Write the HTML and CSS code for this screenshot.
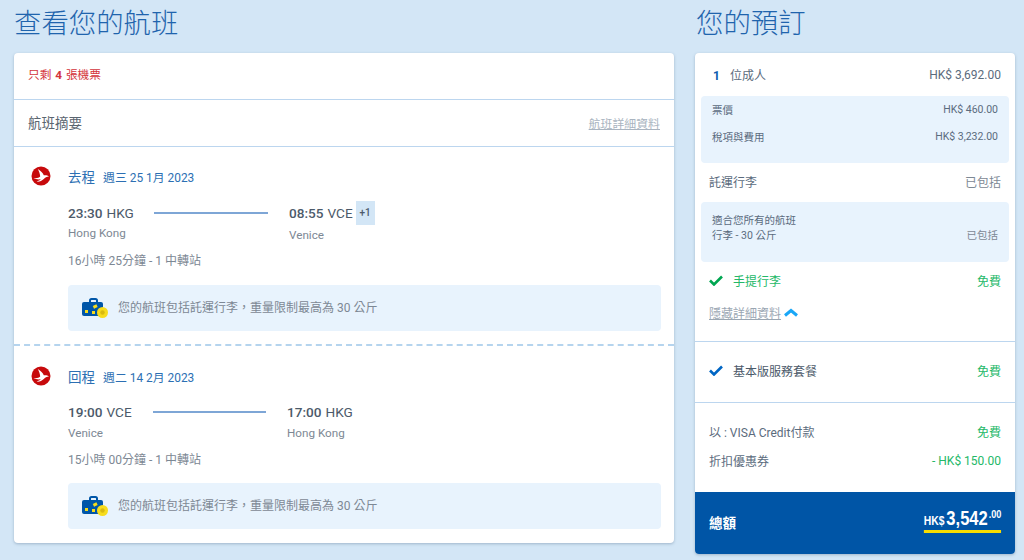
FILE: index.html
```html
<!DOCTYPE html>
<html lang="zh-Hant">
<head>
<meta charset="utf-8">
<title>查看您的航班</title>
<link rel="stylesheet" href="styles.css">
</head>
<body>
<div class="page">
  <main class="left">
    <h1 class="title">查看您的航班</h1>
    <section class="card">
      <div class="alert">只剩 <b>4</b> 張機票</div>
      <div class="summary"><span>航班摘要</span><a class="details">航班詳細資料</a></div>
      <div class="segment seg-out">
        <div class="logo-col">
          <svg class="logo" viewBox="0 0 20 20"><circle cx="10" cy="10" r="9.5" fill="#c70a0c"/><path d="M2.500 12C5.500 12.500 7.800 12 9.200 10.500 9 8 8 5 6.800 3 9.800 4.800 11.800 7 12.800 9.300 14.800 9 16.800 9.400 18 10.500 15.500 10.500 14.200 11.500 12.800 13 10.800 15 8 16 5.500 15.500 7.500 15 8.800 14.200 9.800 13.300 7 13.600 4.500 13.300 2.500 12Z" fill="#fff"/></svg>
        </div>
        <div class="seg-main">
          <div class="seg-head"><span class="way">去程</span><span class="date">週三 25 1月 2023</span></div>
          <div class="route">
            <div class="point from"><div class="time"><b>23:30</b> HKG</div><div class="city">Hong Kong</div></div>
            <div class="line"></div>
            <div class="point to"><div class="time"><b>08:55</b> VCE<span class="plus">+1</span></div><div class="city">Venice</div></div>
          </div>
          <div class="duration">16小時 25分鐘 - 1 中轉站</div>
          <div class="bag-note">
            <svg class="bag" viewBox="0 0 26 20"><path d="M8 5V2.500C8 1.500 8.700 1 9.500 1H13.500C14.300 1 15 1.500 15 2.500V5" fill="none" stroke="#0056a8" stroke-width="2"/><rect x="0" y="4" width="21" height="14" rx="2" fill="#0056a8"/><rect x="3" y="12" width="3" height="3" fill="#f7dc1c"/><rect x="11" y="7" width="4" height="3" fill="#f7dc1c" transform="rotate(-25 13 8)"/><rect x="10" y="13" width="3" height="3" fill="#f7dc1c"/><circle cx="20.500" cy="14.500" r="5.500" fill="#f7dc1c"/><circle cx="20.500" cy="14.500" r="2.200" fill="#d9b90f"/></svg>
            <span>您的航班包括託運行李，重量限制最高為 30 公斤</span>
          </div>
        </div>
      </div>
      <div class="segment seg-back">
        <div class="logo-col">
          <svg class="logo" viewBox="0 0 20 20"><circle cx="10" cy="10" r="9.500" fill="#c70a0c"/><path d="M2.500 12C5.500 12.500 7.800 12 9.200 10.500 9 8 8 5 6.800 3 9.800 4.800 11.800 7 12.800 9.300 14.800 9 16.800 9.400 18 10.500 15.500 10.500 14.200 11.500 12.800 13 10.800 15 8 16 5.500 15.500 7.500 15 8.800 14.200 9.800 13.300 7 13.600 4.500 13.300 2.500 12Z" fill="#fff"/></svg>
        </div>
        <div class="seg-main">
          <div class="seg-head"><span class="way">回程</span><span class="date">週二 14 2月 2023</span></div>
          <div class="route">
            <div class="point from back"><div class="time"><b>19:00</b> VCE</div><div class="city">Venice</div></div>
            <div class="line"></div>
            <div class="point to"><div class="time"><b>17:00</b> HKG</div><div class="city">Hong Kong</div></div>
          </div>
          <div class="duration">15小時 00分鐘 - 1 中轉站</div>
          <div class="bag-note">
            <svg class="bag" viewBox="0 0 26 20"><path d="M8 5V2.500C8 1.500 8.700 1 9.500 1H13.500C14.300 1 15 1.500 15 2.500V5" fill="none" stroke="#0056a8" stroke-width="2"/><rect x="0" y="4" width="21" height="14" rx="2" fill="#0056a8"/><rect x="3" y="12" width="3" height="3" fill="#f7dc1c"/><rect x="11" y="7" width="4" height="3" fill="#f7dc1c" transform="rotate(-25 13 8)"/><rect x="10" y="13" width="3" height="3" fill="#f7dc1c"/><circle cx="20.500" cy="14.500" r="5.500" fill="#f7dc1c"/><circle cx="20.500" cy="14.500" r="2.200" fill="#d9b90f"/></svg>
            <span>您的航班包括託運行李，重量限制最高為 30 公斤</span>
          </div>
        </div>
      </div>
    </section>
  </main>
  <aside class="right">
    <h2 class="title">您的預訂</h2>
    <section class="card booking">
      <div class="b-top">
        <div class="row r-adult"><span><b class="count">1</b>位成人</span><span>HK$ 3,692.00</span></div>
        <div class="panel p-fare">
          <div class="p-row"><span>票價</span><span>HK$ 460.00</span></div>
          <div class="p-row"><span>稅項與費用</span><span>HK$ 3,232.00</span></div>
        </div>
        <div class="row r-bag"><span>託運行李</span><span class="muted">已包括</span></div>
        <div class="panel p-bag">
          <div>適合您所有的航班</div>
          <div class="p-row2"><span>行李 - 30 公斤</span><span class="muted">已包括</span></div>
        </div>
        <div class="row r-hand">
          <span class="with-check green"><svg class="check" viewBox="0 0 14 11"><path d="M1 5.500 5 9.500 13 1.500" fill="none" stroke="#00a651" stroke-width="2.600"/></svg>手提行李</span>
          <span class="green">免費</span>
        </div>
        <div class="hide-link"><a>隱藏詳細資料</a><svg class="chev" viewBox="0 0 14 9"><path d="M1 7.500 7 2.500 13 7.500" fill="none" stroke="#1aa7f7" stroke-width="3"/></svg></div>
      </div>
      <div class="row b-service">
        <span class="with-check"><svg class="check" viewBox="0 0 14 11"><path d="M1 5.500 5 9.500 13 1.500" fill="none" stroke="#0066c4" stroke-width="2.600"/></svg>基本版服務套餐</span>
        <span class="green">免費</span>
      </div>
      <div class="b-pay">
        <div class="row"><span>以 : VISA Credit付款</span><span class="green">免費</span></div>
        <div class="row"><span>折扣優惠券</span><span class="green">- HK$ 150.00</span></div>
      </div>
      <div class="total">
        <span class="total-label">總額</span>
        <span class="amount"><span class="cur">HK$</span><span class="big">3,542</span><sup>.00</sup></span>
      </div>
    </section>
  </aside>
</div>
</body>
</html>
```
FILE: styles.css
```css
* { box-sizing: border-box; }
html, body { margin: 0; padding: 0; }
body {
  width: 1024px;
  height: 560px;
  overflow: hidden;
  background: #d3e6f6;
  font-family: Roboto, "Noto Sans CJK TC", sans-serif;
  color: #5b6b7d;
  font-size: 12px;
}
.page { display: flex; padding: 0 9px 0 14px; gap: 21px; }
.left { width: 660px; }
.right { width: 320px; }
.title {
  margin: 0;
  height: 53px;
  padding-top: 6px;
  font-size: 27.4px;
  line-height: 36px;
  font-weight: 300;
  color: #1f64ad;
}
.right .title { padding-left: 1px; }
.card {
  background: #fff;
  border-radius: 4px;
  box-shadow: 0 1px 3px rgba(60, 90, 120, .35);
}
.alert {
  height: 47px;
  padding: 0 14px 2px;
  line-height: 45px;
  font-size: 11.7px;
  color: #d3333b;
  border-bottom: 1px solid #bcd6ef;
}
.alert b { font-weight: 700; margin: 0 1px; }
.summary {
  height: 47px;
  padding: 0 14px 2px;
  display: flex;
  align-items: center;
  justify-content: space-between;
  border-bottom: 1px solid #bcd6ef;
  font-size: 13.5px;
  color: #5a6570;
}
.details { font-size: 11.900px; color: #a9b4c0; text-decoration: underline; }
.segment { display: flex; padding: 0 13px 0 17px; }
.seg-out { height: 199px; padding-top: 19px; border-bottom: 2px dashed #b5d4ee; }
.seg-back { height: 197px; padding-top: 20px; }
.logo-col { width: 37px; flex: none; }
.logo { width: 20px; height: 20px; display: block; }
.seg-main { flex: 1; min-width: 0; }
.seg-head { display: flex; align-items: center; height: 20px; gap: 8px; color: #2c6fb3; }
.way { font-size: 13.5px; }
.date { font-size: 11.900px; }
.route { display: flex; align-items: flex-start; margin-top: 17px; height: 50px; }
.seg-back .route { margin-top: 16px; }
.point.from { width: 86px; }
.point.from.back { width: 85px; }
.point.to { margin-left: 21px; }
.seg-back .line { width: 113px; }
.time { font-size: 13.6px; line-height: 20px; color: #4c5a6a; display: flex; align-items: center; gap: 4px; height: 20px; }
.time b { font-weight: 500; }
.plus {
  background: #d3e6f6;
  font-size: 10px;
  font-weight: 500;
  height: 24px;
  width: 19px;
  flex: none;
  display: flex;
  align-items: center;
  justify-content: center;
  margin-left: -1px;
}
.city { margin-top: 2px; line-height: 17px; font-size: 11.7px; color: #7d8894; }
.seg-out .point.to .city { margin-top: 4px; }
.seg-back .city { margin-top: 3px; }
.line { width: 114px; height: 2px; background: #7ea6d6; margin-top: 9px; }
.duration { margin-top: 0; line-height: 17px; color: #7d8894; }
.bag-note {
  margin-top: 15px;
  height: 46px;
  background: #e8f3fd;
  border-radius: 4px;
  display: flex;
  align-items: center;
  padding: 0 14px;
  gap: 10px;
  color: #7d8894;
}
.bag-note span { position: relative; top: -2px; }
.seg-back .bag-note { margin-top: 14px; }
.bag { width: 26px; height: 20px; flex: none; }
.booking { height: 501px; display: flex; flex-direction: column; }
.row { display: flex; justify-content: space-between; align-items: center; font-size: 12px; }
.b-top { padding: 0 14px; height: 289px; border-bottom: 1px solid #bcd6ef; }
.r-adult { height: 43px; }
.count { color: #0a5cad; font-weight: 700; margin: 0 10px 0 4px; }
.panel {
  background: #e8f3fd;
  border-radius: 4px;
  margin: 0 -8px;
  padding: 0 11px;
  font-size: 10.500px;
  color: #5b6b7d;
}
.p-fare { height: 67px; }
.p-row { display: flex; justify-content: space-between; height: 27px; align-items: center; }
.r-bag { height: 39px; padding-bottom: 3px; }
.p-bag { height: 60px; padding-top: 11px; line-height: 15px; }
.p-row2 { display: flex; justify-content: space-between; }
.muted { color: #7d8894; }
.r-hand { height: 38px; padding-bottom: 2px; }
.with-check { display: flex; align-items: center; gap: 10px; }
.check { width: 14px; height: 11px; flex: none; }
.green { color: #24b868; }
.hide-link { display: flex; align-items: center; gap: 3px; height: 26px; padding-bottom: 2px; color: #9aa6b2; }
.hide-link a { text-decoration: underline; }
.chev { width: 14px; height: 9px; }
.b-service { height: 61px; padding: 0 14px 4px; border-bottom: 1px solid #bcd6ef; color: #4c5a6a; }
.b-pay { padding: 14px 14px 0; height: 89px; }
.b-pay .row { height: 29px; }
.total {
  flex: 1;
  background: #0055a6;
  border-radius: 0 0 4px 4px;
  color: #fff;
  display: flex;
  justify-content: space-between;
  align-items: center;
  padding: 0 14px;
}
.total-label { font-size: 13.5px; font-weight: 700; padding-bottom: 2px; }
.amount {
  font-weight: 700;
  font-family: "Liberation Sans", sans-serif;
  border-bottom: 3px solid #f7dc00;
  height: 25px;
  display: flex;
  align-items: flex-start;
  white-space: nowrap;
  margin-bottom: 5px;
  transform: scaleX(.83);
  transform-origin: right center;
}
.cur { font-size: 12.5px; line-height: 26px; margin-right: 2px; }
.big { font-size: 20px; line-height: 21px; }
.amount sup { font-size: 11px; line-height: 12px; margin-left: 1px; }
```
